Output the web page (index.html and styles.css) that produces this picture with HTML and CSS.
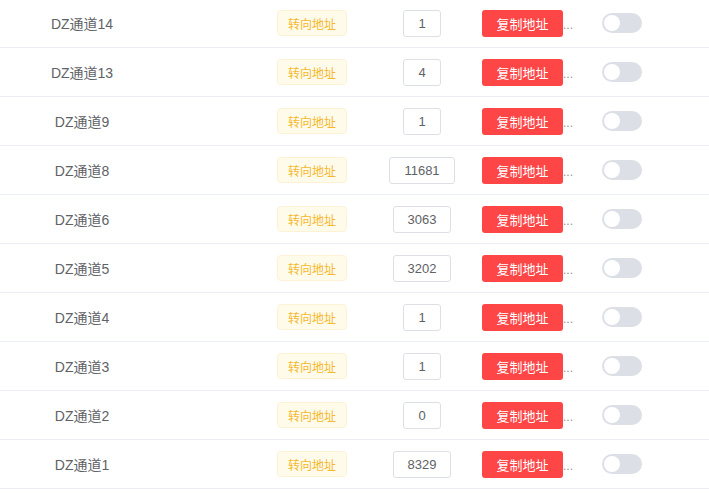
FILE: index.html
```html
<!DOCTYPE html>
<html lang="zh">
<head>
<meta charset="utf-8">
<link rel="stylesheet" href="styles.css">
</head>
<body>
<div class="table">
  <div class="row"><div class="name">DZ通道14</div><div class="c-tag"><span class="tag">转向地址</span></div><div class="c-num"><span class="num">1</span></div><div class="c-btn"><span class="btn">复制地址</span><span class="dots">...</span></div><div class="c-sw"><span class="switch"><span class="knob"></span></span></div></div>
  <div class="row"><div class="name">DZ通道13</div><div class="c-tag"><span class="tag">转向地址</span></div><div class="c-num"><span class="num">4</span></div><div class="c-btn"><span class="btn">复制地址</span><span class="dots">...</span></div><div class="c-sw"><span class="switch"><span class="knob"></span></span></div></div>
  <div class="row"><div class="name">DZ通道9</div><div class="c-tag"><span class="tag">转向地址</span></div><div class="c-num"><span class="num">1</span></div><div class="c-btn"><span class="btn">复制地址</span><span class="dots">...</span></div><div class="c-sw"><span class="switch"><span class="knob"></span></span></div></div>
  <div class="row"><div class="name">DZ通道8</div><div class="c-tag"><span class="tag">转向地址</span></div><div class="c-num"><span class="num">11681</span></div><div class="c-btn"><span class="btn">复制地址</span><span class="dots">...</span></div><div class="c-sw"><span class="switch"><span class="knob"></span></span></div></div>
  <div class="row"><div class="name">DZ通道6</div><div class="c-tag"><span class="tag">转向地址</span></div><div class="c-num"><span class="num">3063</span></div><div class="c-btn"><span class="btn">复制地址</span><span class="dots">...</span></div><div class="c-sw"><span class="switch"><span class="knob"></span></span></div></div>
  <div class="row"><div class="name">DZ通道5</div><div class="c-tag"><span class="tag">转向地址</span></div><div class="c-num"><span class="num">3202</span></div><div class="c-btn"><span class="btn">复制地址</span><span class="dots">...</span></div><div class="c-sw"><span class="switch"><span class="knob"></span></span></div></div>
  <div class="row"><div class="name">DZ通道4</div><div class="c-tag"><span class="tag">转向地址</span></div><div class="c-num"><span class="num">1</span></div><div class="c-btn"><span class="btn">复制地址</span><span class="dots">...</span></div><div class="c-sw"><span class="switch"><span class="knob"></span></span></div></div>
  <div class="row"><div class="name">DZ通道3</div><div class="c-tag"><span class="tag">转向地址</span></div><div class="c-num"><span class="num">1</span></div><div class="c-btn"><span class="btn">复制地址</span><span class="dots">...</span></div><div class="c-sw"><span class="switch"><span class="knob"></span></span></div></div>
  <div class="row"><div class="name">DZ通道2</div><div class="c-tag"><span class="tag">转向地址</span></div><div class="c-num"><span class="num">0</span></div><div class="c-btn"><span class="btn">复制地址</span><span class="dots">...</span></div><div class="c-sw"><span class="switch"><span class="knob"></span></span></div></div>
  <div class="row"><div class="name">DZ通道1</div><div class="c-tag"><span class="tag">转向地址</span></div><div class="c-num"><span class="num">8329</span></div><div class="c-btn"><span class="btn">复制地址</span><span class="dots">...</span></div><div class="c-sw"><span class="switch"><span class="knob"></span></span></div></div>
</div>
</body>
</html>
```
FILE: styles.css
```css
html, body {
  margin: 0;
  padding: 0;
  background: #ffffff;
}
body {
  font-family: "Liberation Sans", "Noto Sans CJK SC", sans-serif;
  color: #606266;
  overflow: hidden;
}
.table {
  margin-top: -1px;
}
.row {
  display: grid;
  grid-template-columns: 164px 98px 100px 10px 100px 110px 80px 1fr;
  height: 48px;
  align-items: center;
  border-bottom: 1px solid #ebeef5;
}
.name {
  grid-column: 1;
  text-align: center;
  font-size: 14px;
  color: #606266;
}
.c-tag {
  grid-column: 3;
  display: flex;
  justify-content: center;
}
.tag {
  display: inline-flex;
  align-items: center;
  height: 24px;
  padding: 0 10px;
  font-size: 12px;
  color: #f5b82e;
  background: #fffbeb;
  border: 1px solid #fdf3d4;
  border-radius: 4px;
}
.c-num {
  grid-column: 5;
  display: flex;
  justify-content: center;
}
.num {
  display: inline-flex;
  align-items: center;
  height: 25px;
  padding: 0 14px;
  font-size: 13px;
  color: #606266;
  border: 1px solid #dcdfe6;
  border-radius: 3px;
  background: #fff;
}
.c-btn {
  grid-column: 6;
  padding: 0 10px;
  display: flex;
  align-items: center;
  overflow: hidden;
  white-space: nowrap;
}
.btn {
  flex: none;
  display: inline-flex;
  align-items: center;
  justify-content: center;
  width: 81px;
  height: 27px;
  font-size: 13px;
  color: #ffffff;
  background: #ff4646;
  border-radius: 3px;
}
.dots {
  font-size: 12px;
  color: #909399;
  line-height: 1;
  padding-top: 4px;
}
.c-sw {
  grid-column: 7;
  display: flex;
  justify-content: center;
}
.switch {
  position: relative;
  display: inline-block;
  width: 40px;
  height: 20px;
  border-radius: 10px;
  background: #dcdfe6;
}
.knob {
  position: absolute;
  top: 2px;
  left: 2px;
  width: 16px;
  height: 16px;
  border-radius: 50%;
  background: #ffffff;
}
```
